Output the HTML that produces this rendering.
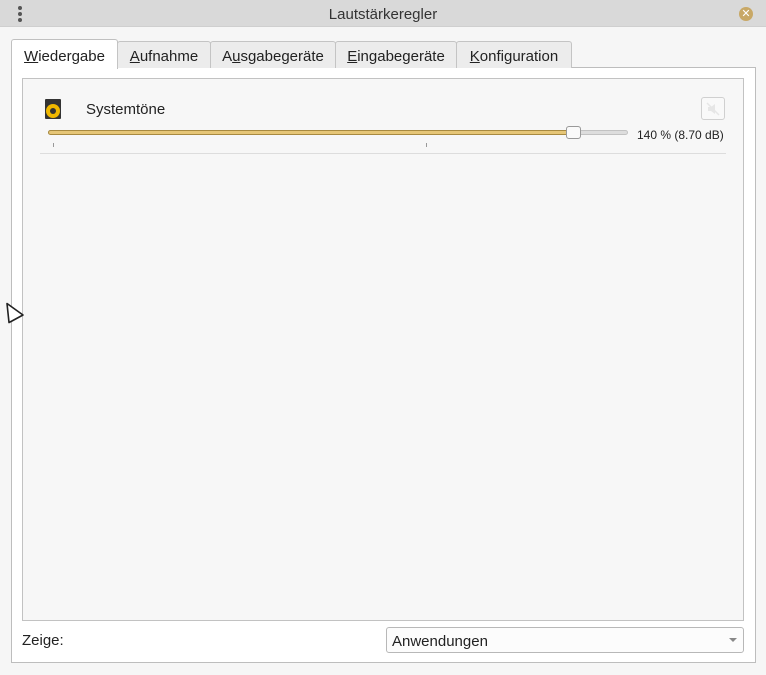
<!DOCTYPE html>
<html><head><style>
*{margin:0;padding:0;box-sizing:border-box}
body{width:766px;height:675px;background:#f6f6f6;font-family:"Liberation Sans","DejaVu Sans",sans-serif;position:relative;overflow:hidden;color:#222}
.a{position:absolute}
.title{left:0;top:0;width:766px;height:27px;background:#d9d9d9;border-bottom:1px solid #cfcfcf}
.tab{position:absolute;top:41px;height:27px;background:#ececec;border:1px solid #c4c4c4;border-bottom:none;border-radius:3px 3px 0 0;font-size:15px;padding-top:6px;text-align:center}
u{text-decoration:underline}
</style></head><body>
<div class="a title"></div>
<div class="a" style="left:18px;top:6px;width:4px;height:4px;border-radius:2px;background:#555"></div>
<div class="a" style="left:18px;top:12px;width:4px;height:4px;border-radius:2px;background:#555"></div>
<div class="a" style="left:18px;top:18px;width:4px;height:4px;border-radius:2px;background:#555"></div>
<div class="a" style="left:0;top:6px;width:766px;text-align:center;font-size:15px;color:#333">Lautstärkeregler</div>
<div class="a" style="left:739px;top:7px;width:14px;height:14px;border-radius:7px;background:#c8a866;color:#fff;font-size:11px;font-weight:bold;text-align:center;line-height:14px">✕</div>

<div class="a" style="left:11px;top:67px;width:745px;height:596px;background:#fff;border:1px solid #bdbdbd"></div>
<div class="tab" style="left:11px;top:39px;width:107px;height:30px;background:#fff;padding-top:8px;border-color:#c0c0c0"><u>W</u>iedergabe</div>
<div class="tab" style="left:117px;width:94px"><u>A</u>ufnahme</div>
<div class="tab" style="left:210px;width:126px">A<u>u</u>sgabegeräte</div>
<div class="tab" style="left:335px;width:122px"><u>E</u>ingabegeräte</div>
<div class="tab" style="left:456px;width:116px"><u>K</u>onfiguration</div>

<div class="a" style="left:22px;top:78px;width:722px;height:543px;background:#f7f7f7;border:1px solid #c2c2c2"></div>
<div class="a" style="left:45px;top:99px;width:16px;height:20px;background:#333;border-radius:1px"></div>
<div class="a" style="left:46px;top:104px;width:14px;height:14px;border-radius:7px;background:#f0b800"></div>
<div class="a" style="left:50px;top:108px;width:6px;height:6px;border-radius:3px;background:#333"></div>
<div class="a" style="left:86px;top:101px;font-size:15px">Systemtöne</div>
<div class="a" style="left:701px;top:97px;width:24px;height:23px;border:1px solid #d0d0d0;border-radius:3px;background:#f9f9f9"></div>
<svg class="a" style="left:705px;top:101px" width="16" height="16"><path d="M3 6h3l4-3v10l-4-3H3z" fill="#e6e6e6"/><path d="M2 2l12 12" stroke="#e6e6e6" stroke-width="1.5"/></svg>
<div class="a" style="left:48px;top:130px;width:580px;height:5px;border-radius:3px;background:#ddd;border:1px solid #c2c2c2"></div>
<div class="a" style="left:48px;top:130px;width:526px;height:5px;border-radius:3px;background:#e6c677;border:1px solid #a88a40"></div>
<div class="a" style="left:566px;top:126px;width:15px;height:13px;border-radius:3px;background:#fafafa;border:1px solid #999"></div>
<div class="a" style="left:53px;top:143px;width:1px;height:4px;background:#999"></div>
<div class="a" style="left:426px;top:143px;width:1px;height:4px;background:#999"></div>
<div class="a" style="left:637px;top:128px;font-size:12px">140 % (8.70 dB)</div>
<div class="a" style="left:40px;top:153px;width:686px;height:1px;background:#ddd"></div>

<svg class="a" style="left:4px;top:301px" width="22" height="24"><path d="M3 2.5 L19 14 L7 20.5 L5 21.5 Z" fill="#fff" stroke="#222" stroke-width="1.6" stroke-linejoin="round"/></svg>

<div class="a" style="left:22px;top:632px;font-size:15px">Zeige:</div>
<div class="a" style="left:386px;top:627px;width:358px;height:26px;border:1px solid #b8b8b8;border-radius:3px;background:#fcfcfc;font-size:15px;padding:5px 0 0 5px">Anwendungen</div>
<div class="a" style="left:729px;top:638px;width:0;height:0;border-left:4px solid transparent;border-right:4px solid transparent;border-top:4px solid #888"></div>
</body></html>
